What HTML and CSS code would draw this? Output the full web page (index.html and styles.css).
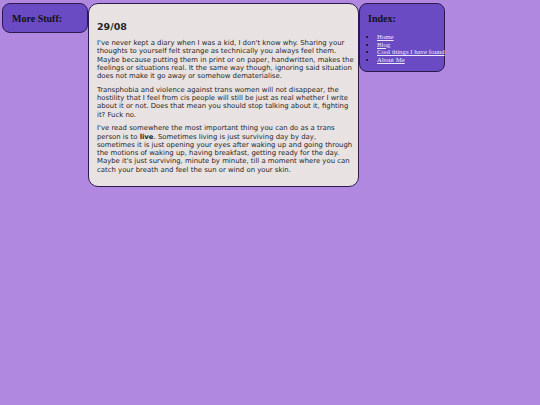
FILE: index.html
```html
<!DOCTYPE html>
<html>
<head>
<meta charset="utf-8">
<link rel="stylesheet" href="styles.css">
</head>
<body>
<div class="layout">
  <aside class="side left">
    <h2>More Stuff:</h2>
  </aside>
  <main class="entry">
    <h1>29/08</h1>
    <p>I've never kept a diary when I was a kid, I don't know why. Sharing your thoughts to yourself felt strange as technically you always feel them. Maybe because putting them in print or on paper, handwritten, makes the feelings or situations real. It the same way though, ignoring said situation does not make it go away or somehow dematerialise.</p>
    <p>Transphobia and violence against trans women will not disappear, the hostility that I feel from cis people will still be just as real whether I write about it or not. Does that mean you should stop talking about it, fighting it? Fuck no.</p>
    <p>I've read somewhere the most important thing you can do as a trans person is to <b>live</b>. Sometimes living is just surviving day by day, sometimes it is just opening your eyes after waking up and going through the motions of waking up, having breakfast, getting ready for the day. Maybe it's just surviving, minute by minute, till a moment where you can catch your breath and feel the sun or wind on your skin.</p>
  </main>
  <aside class="side right">
    <h2>Index:</h2>
    <ul class="links">
      <li class="link-item"><a class="link" href="#">Home</a></li>
      <li class="link-item"><a class="link" href="#">Blog</a></li>
      <li class="link-item"><a class="link" href="#">Cool things I have found</a></li>
      <li class="link-item"><a class="link" href="#">About Me</a></li>
    </ul>
  </aside>
</div>
</body>
</html>
```
FILE: styles.css
```css
html, body {
  margin: 0;
  padding: 0;
  background: #b088e0;
}
body {
  padding: 3px 0 0 2px;
}
.layout {
  display: flex;
  align-items: flex-start;
}
.side {
  width: 86px;
  box-sizing: border-box;
  background: #6a4bc4;
  border: 1.5px solid #2b1b4d;
  border-radius: 8px;
  font-family: "Liberation Serif", serif;
  color: #111;
}
.side h2 {
  margin: 0;
  font-size: 10px;
  font-weight: bold;
}
.left {
  height: 30px;
  padding: 9px 0 0 9px;
}
.right {
  padding: 9px 0 8px 8px;
}
.links {
  margin: 9px 0 0 0;
  padding: 0 0 0 9px;
  line-height: 7.6px;
}
.link-item {
  font-size: 6.8px;
  white-space: nowrap;
}
.link {
  color: #efe9ff;
}
.entry {
  width: 271px;
  box-sizing: border-box;
  height: 184px;
  background: #e8e2e2;
  border: 1.5px solid #2b1b4d;
  border-radius: 10px;
  padding: 17px 3px 0 8px;
  font-family: "DejaVu Sans", sans-serif;
  font-size: 6.9px;
  line-height: 8.25px;
  color: #262626;
}
.entry h1 {
  margin: 0 0 7px 0;
  font-size: 9.5px;
  line-height: 11px;
}
.entry p {
  margin: 0 0 5.5px 0;
}
```
